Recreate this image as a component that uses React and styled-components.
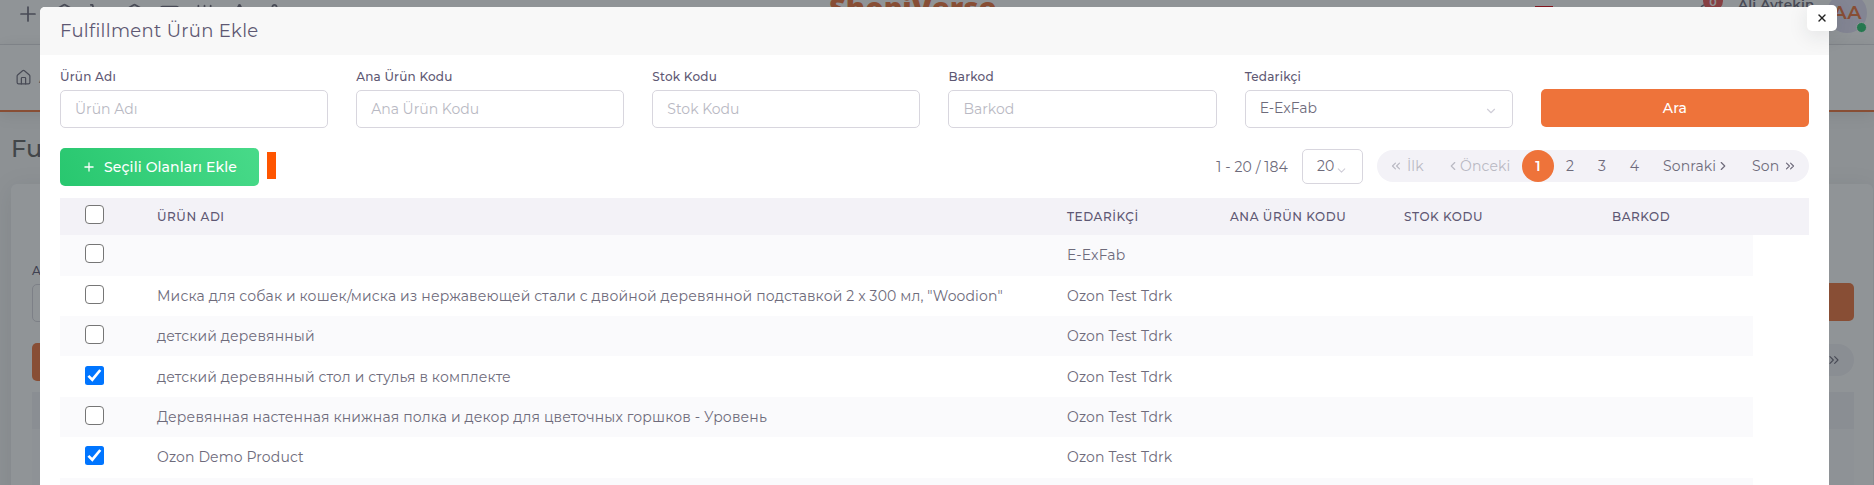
import React from "react";
import styled, { createGlobalStyle, css } from "styled-components";
import { Plus, House, Box, Mail, Settings, Bell, ShoppingCart, Sliders, Star, ChevronDown, ChevronLeft, ChevronRight, ChevronsLeft, ChevronsRight, X } from "lucide-react";

const Global = createGlobalStyle`
  *, *::before, *::after { box-sizing: border-box; }
  body { margin: 0; overflow: hidden; background: #f8f8f8; }
  body, input, button { font-family: Montserrat, Inter, "Noto Sans", sans-serif; letter-spacing: 0.14px; }
`;

const Screen = styled.div`
  position: relative;
  height: 485px;
  overflow: hidden;
  font-size: 14px;
  color: #6e6b7b;
`;

const TopBar = styled.header`
  height: 45px;
  display: flex;
  align-items: flex-start;
  background: #fff;
  border-bottom: 1px solid #e4e4e8;
`;
const TopIcons = styled.div`
  display: flex;
  gap: 14px;
  width: 810px;
  padding: 3px 0 0 16px;
  svg:first-child { margin-top: -1px; }
`;
const Logo = styled.div`
  width: 190px;
  margin: -10px 0 0 19px;
  font-family: "Open Sans", sans-serif;
  font-weight: 800;
  font-size: 29px;
  line-height: 34px;
  letter-spacing: 0;
  color: #ee733a;
`;
const UserArea = styled.div`
  display: flex;
  width: 340px;
  height: 44px;
  margin-left: auto;
`;
const Flag = styled.div`
  width: 18px;
  height: 13px;
  margin: 6px 0 0 1px;
  background: #e3000f;
`;
const BellBox = styled.div`
  position: relative;
  margin: 3px 0 0 142px;
  width: 22px;
`;
const Count = styled.span`
  position: absolute;
  left: 8px;
  top: -12px;
  width: 20px;
  height: 20px;
  border-radius: 50%;
  background: #ea5455;
  color: #fff;
  font-size: 11px;
  font-weight: 600;
  line-height: 22px;
  text-align: center;
`;
const UserName = styled.div`
  width: 78px;
  margin: -4px 0 0 21px;
  font-weight: 600;
  font-size: 13.5px;
  line-height: 16px;
  white-space: nowrap;
`;
const Avatar = styled.div`
  position: relative;
  width: 40px;
  height: 40px;
  margin: -7px 0 0 11px;
  border-radius: 50%;
  background: #e4e1f6;
  color: #ee733a;
  font-size: 19px;
  font-weight: 600;
  line-height: 40px;
  text-align: center;
  &::after {
    content: "";
    position: absolute;
    right: 0;
    bottom: 0;
    width: 11px;
    height: 11px;
    border: 1px solid #fff;
    border-radius: 50%;
    background: #28c76f;
  }
`;
const MenuBar = styled.nav`
  height: 67px;
  display: flex;
  align-items: center;
  gap: 7px;
  padding-left: 15px;
  background: #fff;
  border-bottom: 2px solid #ee733a;
  box-shadow: 0 2px 16px rgba(0, 0, 0, 0.1);
`;
const PageTitle = styled.h2`
  margin: 0;
  height: 72px;
  padding: 21px 0 0 11px;
  font-weight: 500;
  font-size: 24px;
  line-height: 32px;
  color: #636363;
`;
const Card = styled.section`
  margin: 0 1px 0 11px;
  height: 320px;
  padding: 76px 19px 0 21px;
  border-radius: 6px;
  background: #fff;
  box-shadow: 0 4px 24px rgba(34, 41, 47, 0.1);
`;
const CardLabel = styled.div`
  height: 24px;
  font-size: 12px;
  font-weight: 500;
  line-height: 22px;
  color: #5e5873;
`;
const CardLine = styled.div`
  display: flex;
  justify-content: space-between;
  height: ${(p) => p.$h}px;
`;
const GhostInput = styled.div`
  width: 268px;
  height: 38px;
  border: 1px solid #d8d6de;
  border-radius: 5px;
`;
const GhostButton = styled.div`
  width: 268px;
  height: 38px;
  margin-top: ${(p) => p.$top}px;
  border-radius: 5px;
  background: #ee733a;
`;
const GhostPager = styled.div`
  width: 431px;
  height: 32px;
  margin-top: 1px;
  padding-right: 12px;
  display: flex;
  align-items: center;
  justify-content: flex-end;
  border-radius: 16px;
  background: #f3f2f7;
`;
const GhostHead = styled.div`
  height: 37px;
  background: #f3f2f7;
`;
const GhostRow = styled.div`
  height: 56px;
  background: #fafafc;
`;

const Backdrop = styled.div`
  position: absolute;
  inset: 0;
  padding: 7px 45px 0 40px;
  background: rgba(34, 41, 47, 0.5);
`;
const Modal = styled.div`
  position: relative;
  height: 520px;
  border-radius: 5px 5px 0 0;
  background: #fff;
`;
const ModalHeader = styled.div`
  height: 48px;
  padding-left: 20px;
  border-radius: 5px 5px 0 0;
  background: #f8f8f8;
`;
const ModalTitle = styled.h5`
  margin: 0;
  font-weight: 400;
  font-size: 18px;
  line-height: 48px;
  letter-spacing: 0.32px;
  color: #5e5873;
`;
const CloseButton = styled.button`
  position: absolute;
  right: -8px;
  top: -2px;
  width: 30px;
  height: 26px;
  padding: 0;
  display: grid;
  place-items: center;
  border: 0;
  border-radius: 5px;
  background: #fff;
  box-shadow: 0 5px 20px rgba(34, 41, 47, 0.1);
  color: #222;
`;
const ModalBody = styled.div`
  padding: 0 20px;
`;
const Filters = styled.div`
  display: grid;
  grid-template-columns: repeat(6, 1fr);
  column-gap: 28px;
  padding-top: 13px;
`;
const Field = styled.label`
  display: block;
`;
const FieldLabel = styled.div`
  height: 22px;
  line-height: 18px;
  font-size: 12px;
  font-weight: 500;
  letter-spacing: 0.22px;
  color: #5e5873;
`;
const controlBox = css`
  width: 100%;
  height: 38px;
  border: 1px solid #d8d6de;
  border-radius: 5px;
  background: #fff;
  font-size: 14px;
  font-weight: 400;
`;
const Input = styled.input`
  ${controlBox}
  display: block;
  padding: 0 14px;
  letter-spacing: 0;
  &::placeholder { color: #b9b9c3; opacity: 1; }
`;
const Select = styled.div`
  ${controlBox}
  display: flex;
  justify-content: space-between;
  padding: 0 14px 2px 14px;
  align-items: center;
  letter-spacing: 0;
  svg { margin-top: 5px; color: #d0ced8; }
`;
const SearchButton = styled.button`
  height: 38px;
  margin-top: 21px;
  padding: 0;
  border: 0;
  border-radius: 5px;
  background: #ee733a;
  color: #fff;
  font-size: 14px;
  font-weight: 500;
`;
const Toolbar = styled.div`
  display: flex;
  align-items: flex-start;
  height: 70px;
  padding-top: 20px;
`;
const AddButton = styled.button`
  width: 199px;
  height: 38px;
  padding: 0 0 0 22px;
  display: flex;
  align-items: center;
  gap: 8px;
  border: 0;
  border-radius: 5px;
  background: linear-gradient(60deg, #28c76f, #48da89);
  color: #fff;
  font-size: 14px;
  font-weight: 500;
  white-space: nowrap;
`;
const Marker = styled.div`
  width: 9px;
  height: 27px;
  margin: 4px 0 0 8px;
  background: #ff5500;
`;
const RangeText = styled.div`
  margin: 8px 14px 0 auto;
  line-height: 22px;
`;
const PageSize = styled.div`
  width: 61px;
  height: 35px;
  margin: 1px 14px 0 0;
  padding: 0 0 1px 14px;
  display: flex;
  align-items: center;
  border: 1px solid #d8d6de;
  border-radius: 5px;
  svg { margin: 8px 0 0 1px; color: #d0ced8; }
`;
const Pager = styled.div`
  display: flex;
  width: 432px;
  height: 32px;
  margin-top: 2px;
  border-radius: 16px;
  background: #f3f2f7;
`;
const PageItem = styled.div`
  width: ${(p) => p.$w}px;
  height: 32px;
  padding-left: ${(p) => p.$pad || 0}px;
  display: flex;
  align-items: center;
  justify-content: ${(p) => (p.$pad ? "flex-start" : "center")};
  gap: ${(p) => p.$gap || 0}px;
  color: ${(p) => (p.$muted ? "#b9b9c3" : "#6e6b7b")};
  ${(p) => p.$active && css`
    border-radius: 50%;
    background: #ee733a;
    color: #fff;
    font-weight: 600;
  `}
`;

const columns = "97px 910px 163px 174px 208px 1fr";
const TableHead = styled.div`
  display: grid;
  grid-template-columns: ${columns};
  align-items: center;
  height: 37px;
  background: #f3f2f7;
`;
const HeadCell = styled.div`
  font-size: 12px;
  font-weight: 500;
  letter-spacing: 0.57px;
  color: #5e5873;
  white-space: nowrap;
`;
const Row = styled.div`
  display: grid;
  grid-template-columns: ${columns};
  align-items: center;
  width: 1693px;
  height: ${(p) => p.$h}px;
  padding-bottom: ${(p) => p.$lift || 0}px;
  background: ${(p) => (p.$striped ? "#fafafc" : "#fff")};
`;
const Cell = styled.div`
  white-space: nowrap;
`;
const Check = styled.span`
  display: grid;
  place-items: center;
  width: 19px;
  height: 19px;
  margin: 0 0 ${(p) => p.$up || 4}px 25px;
  border: ${(p) => (p.$on ? "0" : "1.5px solid #767676")};
  border-radius: ${(p) => (p.$on ? 2.5 : 4)}px;
  background: ${(p) => (p.$on ? "#0075ff" : "#fff")};
`;

function Checkbox({ on, up }) {
  return (
    <Check $on={on} $up={up}>
      {on && (
        <svg width="19" height="19" viewBox="0 0 19 19" fill="none" stroke="#fff" strokeWidth="2.7">
          <path d="M3.4 9.9 L7.3 13.7 L15.3 4" />
        </svg>
      )}
    </Check>
  );
}

const fields = ["Ürün Adı", "Ana Ürün Kodu", "Stok Kodu", "Barkod"];
const headings = ["ÜRÜN ADI", "TEDARİKÇİ", "ANA ÜRÜN KODU", "STOK KODU", "BARKOD"];
const products = [
  { name: "", supplier: "E-ExFab", h: 41, lift: 2 },
  { name: 'Миска для собак и кошек/миска из нержавеющей стали с двойной деревянной подставкой 2 x 300 мл, "Woodion"', supplier: "Ozon Test Tdrk", h: 40 },
  { name: "детский деревянный", supplier: "Ozon Test Tdrk", h: 40 },
  { name: "детский деревянный стол и стулья в комплекте", supplier: "Ozon Test Tdrk", h: 41, on: true },
  { name: "Деревянная настенная книжная полка и декор для цветочных горшков - Уровень", supplier: "Ozon Test Tdrk", h: 40 },
  { name: "Ozon Demo Product", supplier: "Ozon Test Tdrk", h: 41, lift: 2, on: true },
  { name: "", supplier: "", h: 40, hidden: true },
];

export default function App() {
  return (
    <Screen>
      <Global />
      <TopBar>
        <TopIcons>
          <Plus size={24} strokeWidth={1.7} />
          <Box size={21} strokeWidth={2} />
          <ShoppingCart size={21} strokeWidth={2} />
          <Box size={21} strokeWidth={2} />
          <Mail size={21} strokeWidth={2} />
          <Sliders size={21} strokeWidth={2} />
          <Star size={21} strokeWidth={2} />
          <Settings size={21} strokeWidth={2} />
        </TopIcons>
        <Logo>ShopiVerse</Logo>
        <UserArea>
          <Flag />
          <BellBox><Bell size={21} strokeWidth={1.7} /><Count>0</Count></BellBox>
          <UserName>Ali Aytekin</UserName>
          <Avatar>AA</Avatar>
        </UserArea>
      </TopBar>
      <MenuBar><House size={17} strokeWidth={1.7} />A</MenuBar>
      <PageTitle>Fu</PageTitle>
      <Card>
        <CardLabel>A</CardLabel>
        <CardLine $h={59}><GhostInput /><GhostButton $top={-1} /></CardLine>
        <CardLine $h={49}><GhostButton $top={0} /><GhostPager><ChevronsRight size={16} strokeWidth={1.7} /></GhostPager></CardLine>
        <GhostHead />
        <GhostRow />
      </Card>

      <Backdrop>
        <Modal>
          <ModalHeader><ModalTitle>Fulfillment Ürün Ekle</ModalTitle></ModalHeader>
          <CloseButton><X size={12} strokeWidth={2.8} /></CloseButton>
          <ModalBody>
            <Filters>
              {fields.map((f) => (
                <Field key={f}><FieldLabel>{f}</FieldLabel><Input placeholder={f} /></Field>
              ))}
              <Field><FieldLabel>Tedarikçi</FieldLabel><Select>E-ExFab<ChevronDown size={14} strokeWidth={2} /></Select></Field>
              <SearchButton>Ara</SearchButton>
            </Filters>
            <Toolbar>
              <AddButton><Plus size={14} strokeWidth={2.2} />Seçili Olanları Ekle</AddButton>
              <Marker />
              <RangeText>1 - 20 / 184</RangeText>
              <PageSize>20<ChevronDown size={13} strokeWidth={2} /></PageSize>
              <Pager>
                <PageItem $w={60} $pad={12} $gap={4} $muted><ChevronsLeft size={14} />İlk</PageItem>
                <PageItem $w={85} $pad={9} $muted><ChevronLeft size={14} />Önceki</PageItem>
                <PageItem $w={32} $active>1</PageItem>
                <PageItem $w={32}>2</PageItem>
                <PageItem $w={32}>3</PageItem>
                <PageItem $w={33}>4</PageItem>
                <PageItem $w={89} $pad={12}>Sonraki<ChevronRight size={14} /></PageItem>
                <PageItem $w={69} $pad={12} $gap={4}>Son<ChevronsRight size={14} /></PageItem>
              </Pager>
            </Toolbar>
            <TableHead>
              <Checkbox up={4} />
              {headings.map((h) => <HeadCell key={h}>{h}</HeadCell>)}
            </TableHead>
            {products.map((p, i) => (
              <Row key={i} $h={p.h} $lift={p.lift} $striped={i % 2 === 0}>
                {p.hidden ? <span /> : <Checkbox on={p.on} up={3} />}
                <Cell>{p.name}</Cell>
                <Cell>{p.supplier}</Cell>
              </Row>
            ))}
          </ModalBody>
        </Modal>
      </Backdrop>
    </Screen>
  );
}
